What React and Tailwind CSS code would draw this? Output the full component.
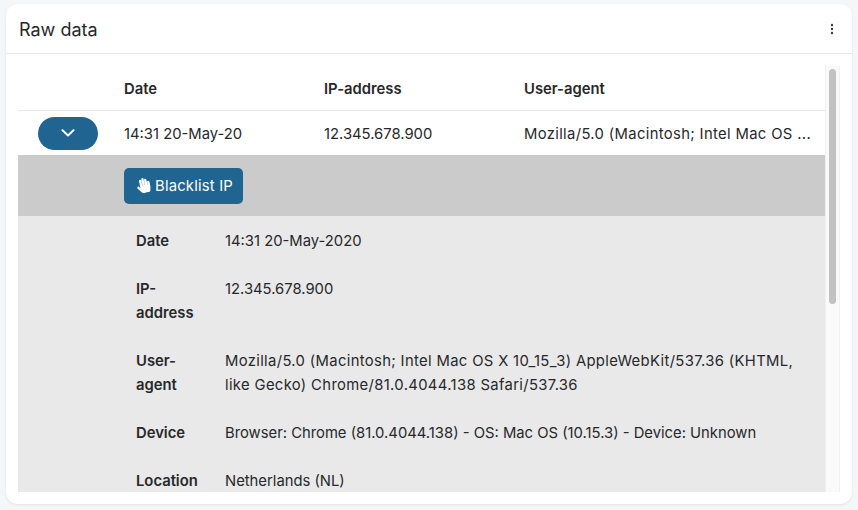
import React from "react";
import { FaHandPaper } from "react-icons/fa";

const details = [
  { label: "Date", value: "14:31 20-May-2020" },
  { label: "IP-address", value: "12.345.678.900" },
  {
    label: "User-agent",
    value:
      "Mozilla/5.0 (Macintosh; Intel Mac OS X 10_15_3) AppleWebKit/537.36 (KHTML, like Gecko) Chrome/81.0.4044.138 Safari/537.36",
    wide: true,
  },
  {
    label: "Device",
    value: "Browser: Chrome (81.0.4044.138) - OS: Mac OS (10.15.3) - Device: Unknown",
  },
  { label: "Location", value: "Netherlands (NL)" },
];

const App = () => {
  return (
    <div className="h-[510px] w-[858px] overflow-hidden bg-[#f5f6f8] px-[6px] pt-[4px] pb-[6px] font-['Inter',sans-serif] text-[14.8px] leading-6 text-[#26282b]">
      <div className="flex h-[500px] flex-col rounded-xl bg-white shadow-[0_1px_3px_rgba(0,0,0,0.08)]">
        <div className="flex h-[50px] shrink-0 items-center justify-between border-b border-[#e8e8e8] pr-[18px] pl-[13px]">
          <h2 className="pt-[2px] text-[18px] font-normal">Raw data</h2>
          <svg width="4" height="12" viewBox="0 0 4 12" fill="#3a3c40">
            <circle cx="2" cy="2" r="1.2" />
            <circle cx="2" cy="6" r="1.2" />
            <circle cx="2" cy="10" r="1.2" />
          </svg>
        </div>
        <div className="mt-3 ml-3 flex h-[426px] w-[822px] overflow-hidden">
          <div className="w-[807px] shrink-0">
            <div className="flex h-[45px] items-center border-b border-[#e8e8e8] pt-[2px] pl-[106px] font-semibold">
              <div className="w-[200px]">Date</div>
              <div className="w-[200px]">IP-address</div>
              <div>User-agent</div>
            </div>
            <div className="flex h-[44px] items-center">
              <div className="w-[106px] pl-5">
                <button className="flex h-[33px] w-[60px] items-center justify-center rounded-full bg-[#206592]">
                  <svg width="14" height="8" viewBox="0 0 14 8" fill="none" stroke="white" strokeWidth="2" strokeLinecap="round" strokeLinejoin="round">
                    <path d="M1.5 1.2 7 6.4l5.5-5.2" />
                  </svg>
                </button>
              </div>
              <div className="w-[200px] pt-[2px]">14:31 20-May-20</div>
              <div className="w-[200px] pt-[2px]">12.345.678.900</div>
              <div className="whitespace-nowrap pt-[2px] tracking-[0.35px]">Mozilla/5.0 (Macintosh; Intel Mac OS ...</div>
            </div>
            <div className="flex h-[61px] items-center bg-[#cbcbcb] pl-[106px]">
              <button className="flex h-9 w-[119px] items-center gap-[4px] rounded-[5px] bg-[#206592] pl-3 tracking-[0.2px] text-white">
                <FaHandPaper className="-rotate-12 text-[15px]" />
                Blacklist IP
              </button>
            </div>
            <div className="h-[300px] bg-[#e9e9e9] pl-[118px]">
              {details.map((row) => (
                <div key={row.label} className="flex pt-[13px] pb-[11px]">
                  <div className="w-[89px] shrink-0 pr-5 font-semibold">{row.label}</div>
                  <div className={row.wide ? "w-[585px] tracking-[0.35px]" : "w-[585px]"}>{row.value}</div>
                </div>
              ))}
            </div>
          </div>
          <div className="h-full w-[15px] border-x border-[#f0f0f0] bg-[#fafafa] px-[3px] pt-[3px]">
            <div className="h-[235px] rounded-full bg-[#c2c2c2]" />
          </div>
        </div>
      </div>
    </div>
  );
};

export default App;
